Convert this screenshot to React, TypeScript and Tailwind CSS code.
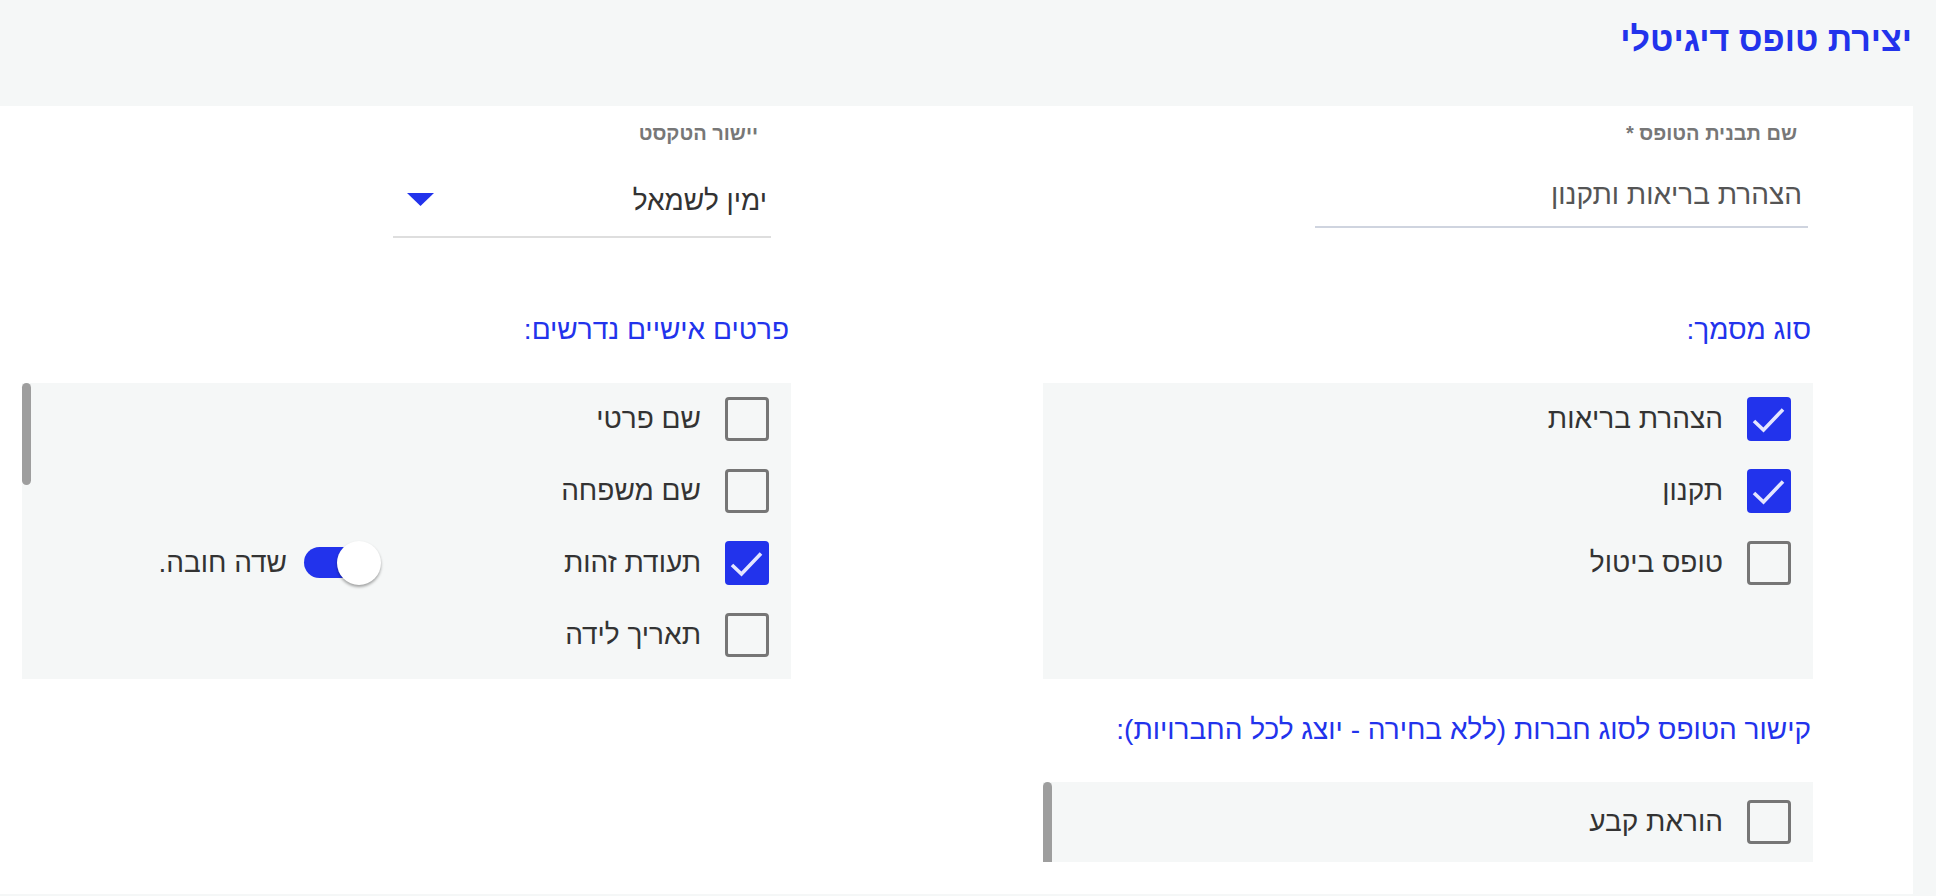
import type { ReactNode } from "react";

const BLUE = "#2233ec";

function Checkbox({ checked }: { checked: boolean }) {
  if (checked) {
    return (
      <span className="flex h-[44px] w-[44px] shrink-0 items-center justify-center rounded-[4px] bg-[#2233ec]">
        <svg viewBox="0 0 44 44" className="h-[44px] w-[44px]" aria-hidden>
          <path
            d="M7 24 L16.5 33 L36 12.5"
            fill="none"
            stroke="#e4e6ff"
            strokeWidth="3.6"
          />
        </svg>
      </span>
    );
  }
  return (
    <span className="block h-[44px] w-[44px] shrink-0 rounded-[4px] border-[3px] border-[#767676]" />
  );
}

function CheckRow({ label, checked, children }: { label: string; checked: boolean; children?: ReactNode }) {
  return (
    <div className="flex h-[72px] items-center">
      <div className="flex w-[410px] shrink-0 items-center gap-[24px] pr-[22px]">
        <Checkbox checked={checked} />
        <span className="text-[28px] leading-[32px] text-[#333]">{label}</span>
      </div>
      {children}
    </div>
  );
}

function Toggle() {
  return (
    <div className="flex items-center gap-[17px]">
      <div className="relative h-[44px] w-[77px] shrink-0">
        <span className="absolute left-0 top-[6px] h-[31px] w-[66px] rounded-full bg-[#2233ec]" />
        <span className="absolute right-0 top-0 h-[44px] w-[44px] rounded-full bg-white shadow-[0_2px_3px_rgba(0,0,0,0.35)]" />
      </div>
      <span className="text-[28px] leading-[32px] text-[#333]">שדה חובה.</span>
    </div>
  );
}

function SectionTitle({ children }: { children: ReactNode }) {
  return (
    <h2 className="pr-[2px] text-[28px] leading-[32px] text-[#2233ec]">{children}</h2>
  );
}

export default function App() {
  return (
    <div
      dir="rtl"
      className="min-h-screen bg-[#f5f7f7]"
      style={{ fontFamily: '"Liberation Sans", Arial, sans-serif' }}
    >
      <header className="flex h-[106px] items-start pr-[24px] pt-[19px]">
        <h1 className="text-[34px] font-bold leading-[40px]" style={{ color: BLUE }}>
          יצירת טופס דיגיטלי
        </h1>
      </header>

      <main className="ml-0 mr-[23px] h-[788px] bg-white pl-[22px] pr-[100px]">
        <div className="grid h-[208px] grid-cols-[770px_769px] gap-x-[252px] pt-[15px]">
          <div className="mr-[5px] w-[493px]">
            <label className="block pr-[11px] text-[20px] font-bold leading-[24px] text-[#777]">
              שם תבנית הטופס *
            </label>
            <div className="mt-[34px] border-b-2 border-[#cfd4df] pb-[15px] pr-[6px] text-[28px] leading-[32px] text-[#555]">
              הצהרת בריאות ותקנון
            </div>
          </div>
          <div className="mr-[20px] w-[378px]">
            <label className="block pr-[13px] text-[20px] font-bold leading-[24px] text-[#777]">
              יישור הטקסט
            </label>
            <div className="mt-[40px] flex items-center justify-between border-b-2 border-[#dedede] pb-[19px] pl-[14px] pr-[4px]">
              <span className="text-[28px] leading-[32px] text-[#333]">ימין לשמאל</span>
              <svg width="27" height="13" viewBox="0 0 27 13" className="-mt-[4px]" aria-hidden>
                <path d="M0 0 H27 L13.5 13 Z" fill={BLUE} />
              </svg>
            </div>
          </div>
        </div>

        <div className="grid grid-cols-[770px_769px] gap-x-[252px]">
          <div>
            <SectionTitle>סוג מסמך:</SectionTitle>
            <div className="mt-[37px] h-[296px] bg-[#f5f7f7]">
              <CheckRow label="הצהרת בריאות" checked />
              <CheckRow label="תקנון" checked />
              <CheckRow label="טופס ביטול" checked={false} />
            </div>
            <div className="mt-[35px]">
              <SectionTitle>קישור הטופס לסוג חברות (ללא בחירה - יוצג לכל החברויות):</SectionTitle>
            </div>
            <div className="relative mt-[36px] flex h-[80px] items-center bg-[#f5f7f7]">
              <div className="flex items-center gap-[24px] pr-[22px]">
                <Checkbox checked={false} />
                <span className="text-[28px] leading-[32px] text-[#333]">הוראת קבע</span>
              </div>
              <span className="absolute left-0 top-0 h-[80px] w-[9px] rounded-t-[5px] bg-[#9e9e9e]" />
            </div>
          </div>

          <div>
            <SectionTitle>פרטים אישיים נדרשים:</SectionTitle>
            <div className="relative mt-[37px] h-[296px] bg-[#f5f7f7]">
              <CheckRow label="שם פרטי" checked={false} />
              <CheckRow label="שם משפחה" checked={false} />
              <CheckRow label="תעודת זהות" checked>
                <Toggle />
              </CheckRow>
              <CheckRow label="תאריך לידה" checked={false} />
              <span className="absolute left-0 top-0 h-[102px] w-[9px] rounded-full bg-[#9e9e9e]" />
            </div>
          </div>
        </div>
      </main>
    </div>
  );
}
